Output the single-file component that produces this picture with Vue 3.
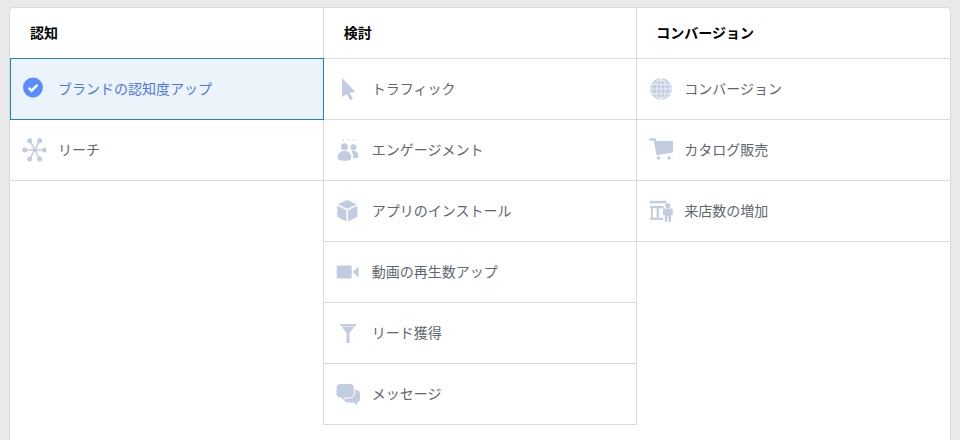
<script setup>
const columns = [
  {
    title: '認知',
    rows: [
      { label: 'ブランドの認知度アップ', icon: 'check', selected: true },
      { label: 'リーチ', icon: 'reach' },
    ],
  },
  {
    title: '検討',
    rows: [
      { label: 'トラフィック', icon: 'cursor' },
      { label: 'エンゲージメント', icon: 'people' },
      { label: 'アプリのインストール', icon: 'cube' },
      { label: '動画の再生数アップ', icon: 'video' },
      { label: 'リード獲得', icon: 'funnel' },
      { label: 'メッセージ', icon: 'chat' },
    ],
  },
  {
    title: 'コンバージョン',
    rows: [
      { label: 'コンバージョン', icon: 'globe' },
      { label: 'カタログ販売', icon: 'cart' },
      { label: '来店数の増加', icon: 'store' },
    ],
  },
]
</script>

<template>
  <div class="page">
    <div class="card">
      <section v-for="col in columns" :key="col.title" class="col">
        <header class="head">{{ col.title }}</header>
        <div v-for="row in col.rows" :key="row.label" class="row" :class="{ selected: row.selected }">
          <svg class="icon" viewBox="0 0 24 24" width="24" height="24" aria-hidden="true">
            <template v-if="row.icon === 'check'">
              <circle cx="11" cy="10.500" r="10" fill="#5b8cff" />
              <path d="M6.600 10.800l3 2.900 5.800-5.800" fill="none" stroke="#fff" stroke-width="2.400" />
            </template>
            <template v-else-if="row.icon === 'reach'">
              <path stroke="#c2cce0" stroke-width="1.500" d="M2.700 12H22.700M7.700 2.700L17.700 21M17.700 2.700L7.700 21" />
              <g fill="#c2cce0">
                <circle cx="12.700" cy="12" r="2" />
                <circle cx="2.700" cy="12" r="2.500" />
                <circle cx="22.700" cy="12" r="2.500" />
                <circle cx="7.700" cy="2.700" r="2.500" />
                <circle cx="17.700" cy="2.700" r="2.500" />
                <circle cx="7.700" cy="21" r="2.500" />
                <circle cx="17.700" cy="21" r="2.500" />
              </g>
            </template>
            <path v-else-if="row.icon === 'cursor'" fill="#c2cce0" d="M6 1L19.500 15L13.500 15.500L17 22L14 23L11 17L6 20Z" />
            <g v-else-if="row.icon === 'people'" fill="#c2cce0">
              <rect x="6.800" y="1.500" width="1.200" height="1.200" />
              <rect x="11.800" y="1.500" width="1.200" height="1.200" />
              <rect x="16.800" y="1.500" width="1.200" height="1.200" />
              <circle cx="8.500" cy="8.700" r="3.500" />
              <circle cx="17.500" cy="9.300" r="3" />
              <path d="M1.700 20c0-5 2.800-7 6.800-7s6.800 2 6.800 7c0 1.800-2 2.800-6.800 2.800s-6.800-1-6.800-2.800z" />
              <path d="M15.500 13.300c1-.5 1.500-.6 2.500-.6 3 0 4.300 2.300 4.300 5.300 0 1.800-2 2.400-5 2.500 0-3-.5-5.300-1.800-7.200z" />
            </g>
            <g v-else-if="row.icon === 'cube'" fill="#c2cce0">
              <path d="M11.300 1L20.800 5.300L11.300 9.800L1.800 5.300Z" />
              <path d="M1.300 6.800L10.500 11.200V22.500L1.300 18Z" />
              <path d="M21.300 6.800L12.100 11.200V22.500L21.300 18Z" />
            </g>
            <g v-else-if="row.icon === 'video'" fill="#c2cce0">
              <rect x="0.700" y="5.500" width="15" height="13" />
              <path d="M16.700 12L22.700 6.500V18Z" />
            </g>
            <path v-else-if="row.icon === 'funnel'" fill="#c2cce0" d="M4.300 3H20V5H4.300ZM5.500 5.500H18.800L13.500 12V22H10.500V12Z" />
            <g v-else-if="row.icon === 'chat'">
              <path fill="#c2cce0" d="M12 8H20C22.500 8 24 9.500 24 12V16.500C24 18.800 22.800 20 21 20.300V23L17.500 20.500H12C9.500 20.500 8 19 8 16.500V12C8 9.500 9.500 8 12 8Z" />
              <path fill="#c2cce0" stroke="#fff" stroke-width="1" d="M5 1.500H13.500C16.500 1.500 18.300 3.300 18.300 6V11.500C18.300 14.200 16.500 16 13.500 16H10L5.500 18.800V16H5C2 16 0 14.200 0 11.500V6C0 3.300 2 1.500 5 1.500Z" />
            </g>
            <g v-else-if="row.icon === 'globe'">
              <circle cx="12" cy="12" r="10.700" fill="#c2cce0" />
              <g fill="none" stroke="#fff" stroke-width="0.600">
                <circle cx="12" cy="12" r="9" />
                <ellipse cx="12" cy="12" rx="4.500" ry="10.500" />
                <path d="M12 1V23M1 12H23M2.500 7.500H21.500M2.500 16.500H21.500" />
              </g>
            </g>
            <g v-else-if="row.icon === 'cart'" fill="#c2cce0">
              <path d="M0 0.300H6.500L7.300 3H24.300V14.500L8.700 17H7.500L4.800 2.700H0.800Z" />
              <circle cx="9.500" cy="20" r="1.700" />
              <circle cx="20" cy="20" r="1.700" />
            </g>
            <g v-else-if="row.icon === 'store'" fill="#c2cce0">
              <rect x="1" y="1.800" width="16.500" height="2.500" />
              <rect x="1" y="7" width="13.500" height="2.300" />
              <rect x="2" y="9.300" width="1.800" height="9.500" />
              <rect x="7.700" y="9.300" width="2.200" height="9.500" />
              <rect x="1" y="18.700" width="13" height="2.200" />
              <circle cx="18.700" cy="6.700" r="2.500" />
              <path d="M14 9.500H23.700V16H22V22.800H19.500V17H18.300V22.800H15.800V16H14Z" />
            </g>
          </svg>
          <span class="label">{{ row.label }}</span>
        </div>
      </section>
    </div>
  </div>
</template>

<style>
html,
body {
  margin: 0;
  background: #e8e9eb;
  overflow: hidden;
}
</style>

<style scoped>
.page {
  padding: 7px 9px 0;
  height: 433px;
  overflow: hidden;
  font-family: "Noto Sans CJK JP", "Noto Sans", sans-serif;
}

.card {
  display: grid;
  grid-template-columns: repeat(3, 1fr);
  align-items: start;
  min-height: 500px;
  background: #fff;
  border: 1px solid #d9dadc;
  border-radius: 4px;
}

.col:nth-child(2) {
  border-left: 1px solid #dadbdd;
  border-right: 1px solid #dadbdd;
  border-bottom: 1px solid #dadbdd;
}

.head {
  height: 50px;
  line-height: 48px;
  padding-left: 20px;
  font-size: 14px;
  font-weight: 700;
  color: #000;
  border-bottom: 1px solid #dadbdd;
}

.col:nth-child(2) .head {
  padding-left: 19.500px;
}

.col:nth-child(3) .head {
  padding-left: 19.500px;
}

.row {
  display: flex;
  align-items: center;
  gap: 12px;
  height: 60px;
  padding-left: 12px;
  border-bottom: 1px solid #dadbdd;
}

.col:nth-child(2) .row {
  gap: 11.500px;
}

.col:nth-child(3) .row {
  gap: 11.500px;
}

.col:nth-child(2) .row:last-child {
  border-bottom: 0;
}

.icon {
  flex: none;
}

.label {
  margin-top: -2px;
  font-size: 14px;
  color: #606770;
}

.selected {
  position: relative;
  z-index: 1;
  margin: -1px -1px 0 0;
  background: #ebf4fb;
  border: 1px solid #1b82e0;
  padding-left: 11px;
}

.selected .label {
  color: #4f78e6;
}
</style>
